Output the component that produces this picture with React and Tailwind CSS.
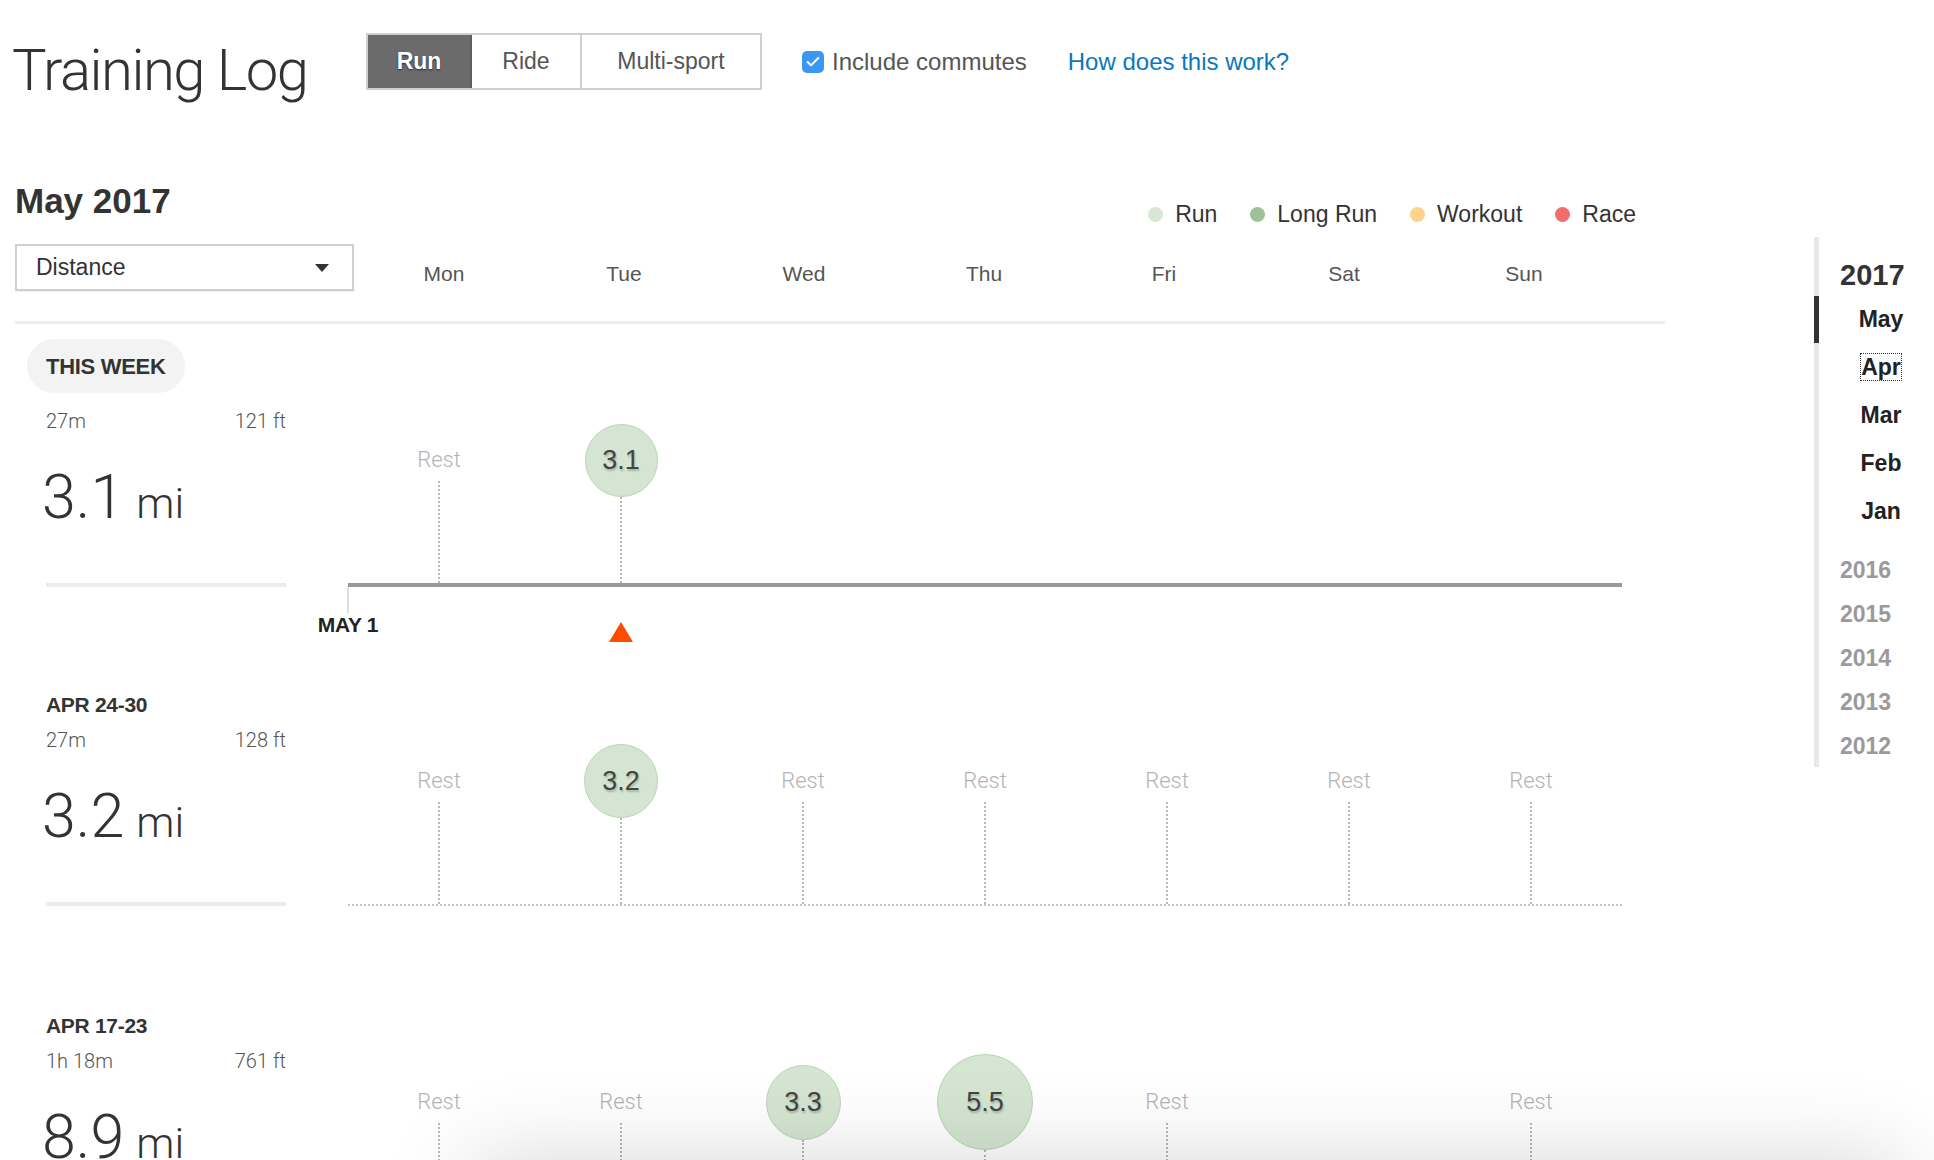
import { Check } from 'lucide-react';

const LIGHT = "font-['Roboto','Liberation_Sans',sans-serif] font-light";

const days = ['Mon', 'Tue', 'Wed', 'Thu', 'Fri', 'Sat', 'Sun'];

const legend = [
    { name: 'Run', dot: 'bg-[#d6e8d3]' },
    { name: 'Long Run', dot: 'bg-[#9cc295]' },
    { name: 'Workout', dot: 'bg-[#ffd28c]' },
    { name: 'Race', dot: 'bg-[#f26c6c]' },
];

const weeks = [
    { label: 'THIS WEEK', current: true, time: '27m', elev: '121 ft', dist: '3.1', days: ['rest', 3.1, null, null, null, null, null] },
    { label: 'APR 24-30', time: '27m', elev: '128 ft', dist: '3.2', days: ['rest', 3.2, 'rest', 'rest', 'rest', 'rest', 'rest'] },
    { label: 'APR 17-23', time: '1h 18m', elev: '761 ft', dist: '8.9', days: ['rest', 'rest', 3.3, 5.5, 'rest', null, 'rest'] },
];

function Rest() {
    return (
        <div className="flex flex-col items-center">
            <div className={`${LIGHT} text-[22px] leading-[24px] text-[#b3b3b3]`}>Rest</div>
            <div className="mt-[9px] h-[102px] border-l-2 border-dotted border-[#b8b8b8]" />
        </div>
    );
}

function Bubble({ value }) {
    // el tamaño del círculo depende de la distancia
    const d = Math.round(43 + 9.6 * value);
    return (
        <div className="flex flex-col items-center">
            <div
                className="flex items-center justify-center rounded-full border-[1.5px] border-[#b9d6b4] bg-[#d4e6d1] text-[27px] text-[#444] [text-shadow:1px_2px_2px_rgba(0,0,0,0.22)]"
                style={{ width: d, height: d }}
            >
                {value}
            </div>
            <div className="border-l-2 border-dotted border-[#b8b8b8]" style={{ height: 123 - d / 2 }} />
        </div>
    );
}

function Week({ week }) {
    return (
        <div className="flex items-end">
            {/* resumen de la semana */}
            <div className="flex w-[259px] flex-col">
                {week.current ? (
                    <div className="flex h-[54px] w-fit items-center rounded-full bg-[#f3f3f3] px-[19px] text-[22px] font-bold tracking-[-0.3px] text-[#333]">
                        {week.label}
                    </div>
                ) : (
                    <div className="pl-[19px] text-[21px] font-bold leading-[24px] tracking-[-0.3px] text-[#333]">{week.label}</div>
                )}
                <div className={`${LIGHT} flex justify-between pl-[19px] text-[20px] leading-[24px] text-[#555] ${week.current ? 'mt-[16px]' : 'mt-[11px]'}`}>
                    <span>{week.time}</span>
                    <span>{week.elev}</span>
                </div>
                <div className={`${LIGHT} mt-[34px] flex h-[61px] items-baseline pl-[15px] text-[61px] leading-[61px] text-[#333]`}>
                    <span>{week.dist}</span>
                    <span className="ml-[12px] text-[43px] leading-none">mi</span>
                </div>
                <div className="ml-[19px] mt-[55px] h-[4px] bg-[#ebebeb]" />
            </div>

            {/* gráfico de días */}
            <div className="ml-[62px] w-[1274px]">
                <div className="grid h-[190px] grid-cols-7 items-end">
                    {week.days.map((d, i) => (
                        <div key={i} className="flex justify-center">
                            {d === 'rest' ? <Rest /> : d ? <Bubble value={d} /> : null}
                        </div>
                    ))}
                </div>
                {week.current ? (
                    <div className="h-[4px] bg-[#999]" />
                ) : (
                    <div className="border-t-2 border-dotted border-[#c4c4c4]" />
                )}
            </div>
        </div>
    );
}

export default function App() {
    return (
        <div className="relative h-[1160px] w-[1934px] overflow-hidden bg-white font-['Liberation_Sans',Arial,sans-serif] text-[#333]">
            <div className="flex">
                <div className="w-[1814px] pl-[12px]">
                    {/* cabecera */}
                    <div className="mt-[33px] flex h-[57px] items-start">
                        <h1 className={`${LIGHT} mt-[7px] w-[354px] whitespace-nowrap text-[58px] leading-[61px] tracking-[-1.5px] text-[#333]`}>Training Log</h1>
                        <div className="flex h-[57px] border-2 border-[#cfcfcf] text-[23px]">
                            <button className="w-[104px] border-r-2 border-[#5e5e5e] bg-[#6b6b6b] font-bold text-white [text-shadow:0_1px_2px_rgba(0,0,0,0.6)]">Run</button>
                            <button className="w-[110px] border-r-2 border-[#cfcfcf] text-[#555]">Ride</button>
                            <button className="w-[178px] text-[#555]">Multi-sport</button>
                        </div>
                        <label className="ml-[40px] flex h-[57px] items-center">
                            <span className="flex h-[22px] w-[22px] items-center justify-center rounded-[5px] bg-[#3b97f4]">
                                <Check size={16} strokeWidth={3} className="text-white" />
                            </span>
                            <span className="ml-[8px] text-[24px] text-[#555]">Include commutes</span>
                        </label>
                        <a className="ml-[41px] flex h-[57px] items-center text-[24px] text-[#0a78be]">How does this work?</a>
                    </div>

                    {/* mes y leyenda */}
                    <div className="mt-[91px] flex h-[40px] w-[1624px] items-start justify-between pl-[3px]">
                        <h2 className="text-[35px] font-bold leading-[40px] text-[#333]">May 2017</h2>
                        <div className="mt-[19px] flex items-center text-[23px] leading-[28px] text-[#333]">
                            {legend.map((l) => (
                                <div key={l.name} className="ml-[33px] flex items-center">
                                    <span className={`h-[15px] w-[15px] rounded-full ${l.dot}`} />
                                    <span className="ml-[12px]">{l.name}</span>
                                </div>
                            ))}
                        </div>
                    </div>

                    <div className="mt-[23px] flex h-[47px] items-start pl-[3px]">
                        <div className="flex h-[47px] w-[339px] items-center justify-between border-2 border-[#d0d0d0] pl-[19px] pr-[23px] text-[23px] text-[#333] shadow-[0_1px_1px_rgba(0,0,0,0.06)]">
                            <span>Distance</span>
                            <span className="border-l-[7px] border-r-[7px] border-t-[8px] border-l-transparent border-r-transparent border-t-[#333]" />
                        </div>
                        <div className="mt-[18px] grid w-[1260px] grid-cols-7 text-[21px] leading-[24px] text-[#555]">
                            {days.map((d) => (
                                <div key={d} className="text-center">{d}</div>
                            ))}
                        </div>
                    </div>

                    <div className="ml-[3px] mt-[30px] w-[1650px] border-t-[3px] border-[#ebebeb]" />

                    {/* semanas */}
                    <div className="mt-[15px] pl-[15px]">
                        <Week week={weeks[0]} />
                        <div className="ml-[321px] grid h-[106px] w-[1274px] grid-cols-7">
                            <div className="flex">
                                <div className="flex w-0 flex-col items-center">
                                    <div className="h-[26px] w-[2px] shrink-0 bg-[#dcdcdc]" />
                                    <div className="whitespace-nowrap text-[21px] font-bold leading-[24px] tracking-[-0.3px] text-[#222]">MAY 1</div>
                                </div>
                            </div>
                            <div className="flex justify-center">
                                <div className="mt-[35px] h-0 w-0 border-b-[20px] border-l-[12px] border-r-[12px] border-b-[#fc4c02] border-l-transparent border-r-transparent" />
                            </div>
                        </div>
                        <Week week={weeks[1]} />
                        <div className="mt-[108px]">
                            <Week week={weeks[2]} />
                        </div>
                    </div>
                </div>

                {/* barra lateral de meses */}
                <div className="flex w-[120px] pt-[237px]">
                    <div className="h-[530px] w-[5px] bg-[#e8e8e8]">
                        <div className="mt-[59px] h-[47px] bg-[#333]" />
                    </div>
                    <div className="pl-[21px] font-bold">
                        <div className="pt-[22px] text-[29px] leading-[32px] text-[#333]">2017</div>
                        <div className="mt-[4px] w-[82px] text-center text-[23px] leading-[48px] text-[#222]">
                            <div>May</div>
                            <div><span className="outline-1 outline-dotted outline-[#333]">Apr</span></div>
                            <div>Mar</div>
                            <div>Feb</div>
                            <div>Jan</div>
                        </div>
                        <div className="mt-[13px] text-[23px] leading-[44px] text-[#9a9a9a]">
                            <div>2016</div>
                            <div>2015</div>
                            <div>2014</div>
                            <div>2013</div>
                            <div>2012</div>
                        </div>
                    </div>
                </div>
            </div>

            {/* sombra del panel inferior */}
            <div className="absolute left-[470px] right-[30px] top-[1160px] h-[120px] shadow-[0_0_90px_rgba(0,0,0,0.16)]" />
        </div>
    );
}
